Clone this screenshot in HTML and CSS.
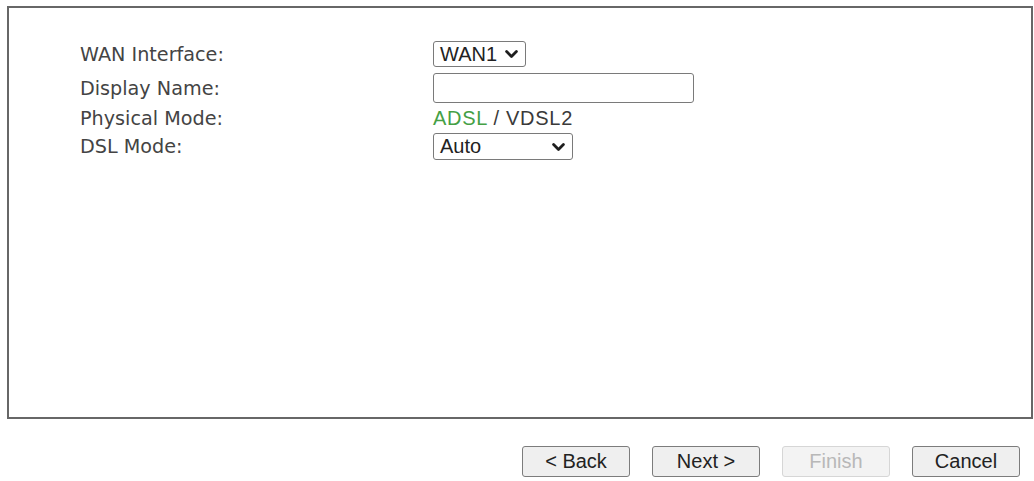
FILE: index.html
```html
<!DOCTYPE html>
<html>
<head>
<meta charset="utf-8">
<link rel="stylesheet" href="styles.css">
</head>
<body>
<div class="panel">
  <div class="form">
    <div class="label r1">WAN Interface:</div>
    <div class="ctrl r1">
      <div class="sel sel-wan"><span>WAN1</span>
        <svg class="chev" viewBox="0 0 13 9" width="13" height="9"><path d="M1.6 1.6 L6.5 6.5 L11.4 1.6" fill="none" stroke="#1e1e1e" stroke-width="2.8" stroke-linecap="round" stroke-linejoin="round"/></svg>
      </div>
    </div>
    <div class="label r2">Display Name:</div>
    <div class="ctrl r2"><input class="txt" type="text"></div>
    <div class="label r3">Physical Mode:</div>
    <div class="ctrl r3"><span class="mode"><span class="on">ADSL</span> / VDSL2</span></div>
    <div class="label r4">DSL Mode:</div>
    <div class="ctrl r4">
      <div class="sel sel-dsl"><span>Auto</span>
        <svg class="chev" viewBox="0 0 13 9" width="13" height="9"><path d="M1.6 1.6 L6.5 6.5 L11.4 1.6" fill="none" stroke="#1e1e1e" stroke-width="2.8" stroke-linecap="round" stroke-linejoin="round"/></svg>
      </div>
    </div>
  </div>
</div>
<div class="buttons">
  <button class="btn">&lt; Back</button>
  <button class="btn">Next &gt;</button>
  <button class="btn disabled" disabled>Finish</button>
  <button class="btn">Cancel</button>
</div>
</body>
</html>
```

FILE: styles.css
```css
html, body {
  margin: 0;
  padding: 0;
  background: #ffffff;
}
body {
  width: 1034px;
  height: 481px;
  overflow: hidden;
}
.panel {
  margin: 6px 1px 0 7px;
  height: 409px;
  border: 2px solid #676767;
  box-sizing: content-box;
}
.form {
  display: grid;
  grid-template-columns: 353px 1fr;
  grid-template-rows: 26px 36px 30px 27px;
  padding: 33px 0 0 71px;
}
.r1 { grid-row: 1; }
.r2 { grid-row: 2; padding-top: 6px; }
.r3 { grid-row: 3; }
.r4 { grid-row: 4; }
.label {
  font-family: "DejaVu Sans", Verdana, sans-serif;
  font-size: 19.2px;
  color: #444444;
  display: flex;
  align-items: center;
}
.ctrl {
  display: flex;
  align-items: center;
  font-family: "Liberation Sans", Arial, sans-serif;
  font-size: 20px;
  color: #333;
}
.sel {
  position: relative;
  box-sizing: border-box;
  height: 100%;
  border: 1px solid #7a7a7a;
  border-radius: 3px;
  background: #fff;
  display: flex;
  align-items: center;
  padding-left: 6px;
  color: #222;
}
.sel-wan { width: 93px; }
.sel-dsl { width: 140px; }
.chev {
  position: absolute;
  right: 7px;
  top: 50%;
  margin-top: -4px;
}
.txt {
  box-sizing: border-box;
  width: 261px;
  height: 30px;
  margin: 0;
  border: 1px solid #7a7a7a;
  border-radius: 3px;
  background: #fff;
  outline: none;
}
.mode { letter-spacing: 0.7px; color: #3a3a3a; }
.on { color: #45a045; }
.buttons {
  display: flex;
  justify-content: flex-end;
  gap: 22px;
  margin: 27px 14px 0 0;
}
.btn {
  box-sizing: border-box;
  width: 108px;
  height: 31px;
  margin: 0;
  padding: 0;
  border: 1px solid #7c7c7c;
  border-radius: 3px;
  background: #efefef;
  font-family: "Liberation Sans", Arial, sans-serif;
  font-size: 20px;
  color: #222;
}
.btn.disabled {
  border-color: #d6d6d6;
  background: #f3f3f3;
  color: #b8b8b8;
}
```
